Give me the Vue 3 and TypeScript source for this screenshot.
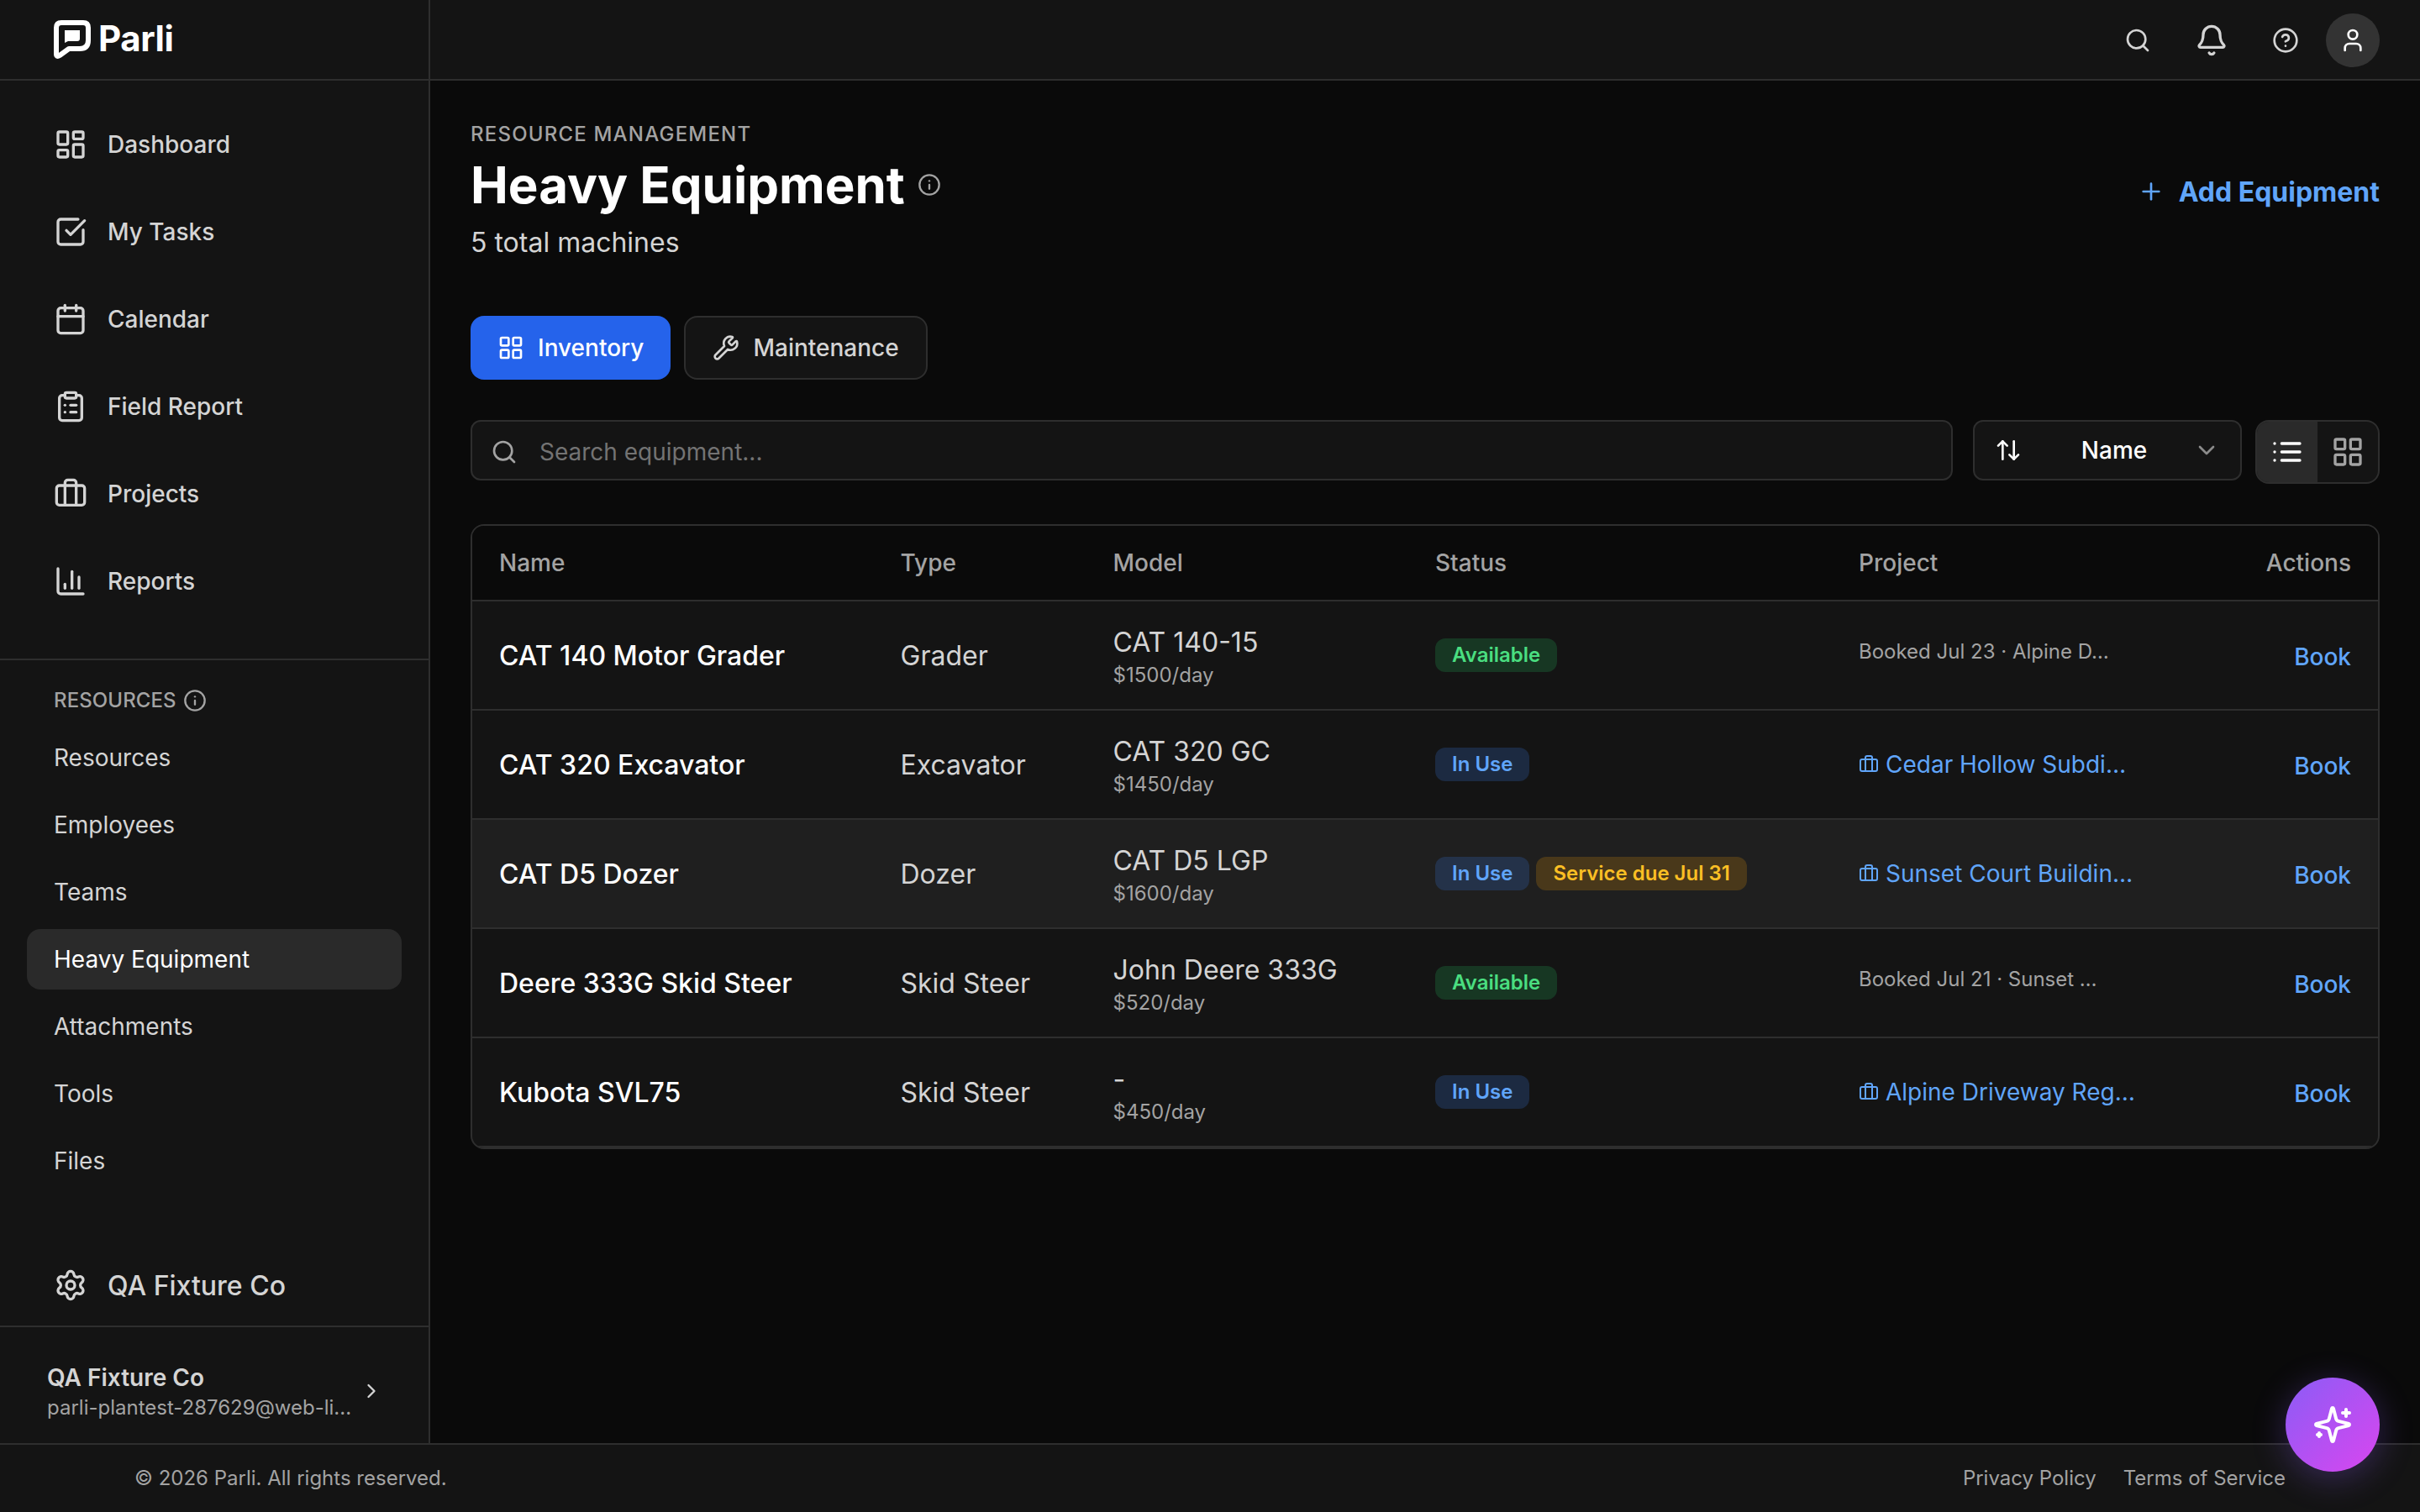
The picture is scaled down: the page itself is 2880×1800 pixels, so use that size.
<script setup lang="ts">
interface Badge {
  label: string
  tone: 'green' | 'blue' | 'amber'
}

interface Machine {
  name: string
  type: string
  model: string
  rate: string
  badges: Badge[]
  booked?: string
  project?: string
  hovered?: boolean
}

const icons: Record<string, string> = {
  dashboard:
    '<rect width="7" height="9" x="3" y="3" rx="1"/><rect width="7" height="5" x="14" y="3" rx="1"/><rect width="7" height="9" x="14" y="12" rx="1"/><rect width="7" height="5" x="3" y="16" rx="1"/>',
  tasks:
    '<path d="M21 10.656V19a2 2 0 0 1-2 2H5a2 2 0 0 1-2-2V5a2 2 0 0 1 2-2h12.344"/><path d="m9 11 3 3L22 4"/>',
  calendar:
    '<path d="M8 2v4"/><path d="M16 2v4"/><rect width="18" height="18" x="3" y="4" rx="2"/><path d="M3 10h18"/>',
  clipboard:
    '<rect width="8" height="4" x="8" y="2" rx="1" ry="1"/><path d="M16 4h2a2 2 0 0 1 2 2v14a2 2 0 0 1-2 2H6a2 2 0 0 1-2-2V6a2 2 0 0 1 2-2h2"/><path d="M12 11h4"/><path d="M12 16h4"/><path d="M8 11h.01"/><path d="M8 16h.01"/>',
  briefcase:
    '<path d="M16 20V4a2 2 0 0 0-2-2h-4a2 2 0 0 0-2 2v16"/><rect width="20" height="14" x="2" y="6" rx="2"/>',
  chart:
    '<path d="M3 3v16a2 2 0 0 0 2 2h16"/><path d="M18 17V9"/><path d="M13 17V5"/><path d="M8 17v-3"/>',
  info: '<circle cx="12" cy="12" r="10"/><path d="M12 16v-4"/><path d="M12 8h.01"/>',
  settings:
    '<path d="M9.671 4.136a2.34 2.34 0 0 1 4.659 0 2.34 2.34 0 0 0 3.319 1.915 2.34 2.34 0 0 1 2.33 4.033 2.34 2.34 0 0 0 0 3.831 2.34 2.34 0 0 1-2.33 4.033 2.34 2.34 0 0 0-3.319 1.915 2.34 2.34 0 0 1-4.659 0 2.34 2.34 0 0 0-3.32-1.915 2.34 2.34 0 0 1-2.33-4.033 2.34 2.34 0 0 0 0-3.831A2.34 2.34 0 0 1 6.35 6.051a2.34 2.34 0 0 0 3.319-1.915"/><circle cx="12" cy="12" r="3"/>',
  chevronRight: '<path d="m9 18 6-6-6-6"/>',
  chevronDown: '<path d="m6 9 6 6 6-6"/>',
  search: '<path d="m21 21-4.34-4.34"/><circle cx="11" cy="11" r="8"/>',
  bell: '<path d="M10.268 21a2 2 0 0 0 3.464 0"/><path d="M3.262 15.326A1 1 0 0 0 4 17h16a1 1 0 0 0 .74-1.673C19.41 13.956 18 12.499 18 8A6 6 0 0 0 6 8c0 4.499-1.411 5.956-2.738 7.326"/>',
  help: '<circle cx="12" cy="12" r="10"/><path d="M9.09 9a3 3 0 0 1 5.83 1c0 2-3 3-3 3"/><path d="M12 17h.01"/>',
  user: '<path d="M19 21v-2a4 4 0 0 0-4-4H9a4 4 0 0 0-4 4v2"/><circle cx="12" cy="7" r="4"/>',
  plus: '<path d="M5 12h14"/><path d="M12 5v14"/>',
  grid: '<rect width="7" height="7" x="3" y="3" rx="1"/><rect width="7" height="7" x="14" y="3" rx="1"/><rect width="7" height="7" x="14" y="14" rx="1"/><rect width="7" height="7" x="3" y="14" rx="1"/>',
  wrench:
    '<path d="M14.7 6.3a1 1 0 0 0 0 1.4l1.6 1.6a1 1 0 0 0 1.4 0l3.106-3.105c.32-.322.863-.22.983.218a6 6 0 0 1-8.259 7.057l-7.91 7.91a1 1 0 0 1-2.999-3l7.91-7.91a6 6 0 0 1 7.057-8.259c.438.12.54.662.219.984z"/>',
  sort: '<path d="m21 16-4 4-4-4"/><path d="M17 20V4"/><path d="m3 8 4-4 4 4"/><path d="M7 4v16"/>',
  list: '<path d="M3 12h.01"/><path d="M3 18h.01"/><path d="M3 6h.01"/><path d="M8 12h13"/><path d="M8 18h13"/><path d="M8 6h13"/>',
  sparkles:
    '<path d="M9.937 15.5A2 2 0 0 0 8.5 14.063l-6.135-1.582a.5.5 0 0 1 0-.962L8.5 9.936A2 2 0 0 0 9.937 8.5l1.582-6.135a.5.5 0 0 1 .963 0L14.063 8.5A2 2 0 0 0 15.5 9.937l6.135 1.581a.5.5 0 0 1 0 .964L15.5 14.063a2 2 0 0 0-1.437 1.437l-1.582 6.135a.5.5 0 0 1-.963 0z"/><path d="M20 3v4"/><path d="M22 5h-4"/><path d="M4 17v2"/><path d="M5 18H3"/>',
}

const primaryNav = [
  { label: 'Dashboard', icon: 'dashboard' },
  { label: 'My Tasks', icon: 'tasks' },
  { label: 'Calendar', icon: 'calendar' },
  { label: 'Field Report', icon: 'clipboard' },
  { label: 'Projects', icon: 'briefcase' },
  { label: 'Reports', icon: 'chart' },
]

const resourceNav = ['Resources', 'Employees', 'Teams', 'Heavy Equipment', 'Attachments', 'Tools', 'Files']
const activeResource = 'Heavy Equipment'

const columns = ['Name', 'Type', 'Model', 'Status', 'Project', 'Actions']

const available: Badge = { label: 'Available', tone: 'green' }
const inUse: Badge = { label: 'In Use', tone: 'blue' }

const machines: Machine[] = [
  { name: 'CAT 140 Motor Grader', type: 'Grader', model: 'CAT 140-15', rate: '$1500/day', badges: [available], booked: 'Booked Jul 23 · Alpine D…' },
  { name: 'CAT 320 Excavator', type: 'Excavator', model: 'CAT 320 GC', rate: '$1450/day', badges: [inUse], project: 'Cedar Hollow Subdi…' },
  {
    name: 'CAT D5 Dozer',
    type: 'Dozer',
    model: 'CAT D5 LGP',
    rate: '$1600/day',
    badges: [inUse, { label: 'Service due Jul 31', tone: 'amber' }],
    project: 'Sunset Court Buildin…',
    hovered: true,
  },
  { name: 'Deere 333G Skid Steer', type: 'Skid Steer', model: 'John Deere 333G', rate: '$520/day', badges: [available], booked: 'Booked Jul 21 · Sunset …' },
  { name: 'Kubota SVL75', type: 'Skid Steer', model: '-', rate: '$450/day', badges: [inUse], project: 'Alpine Driveway Reg…' },
]
</script>

<template>
  <div class="app">
    <div class="shell">
      <aside class="sidebar">
        <div class="brand">
          <svg class="brand-mark" viewBox="0 0 44 48" fill="none">
            <path d="M9 3H35Q41 3 41 9V24Q41 34 31 34H18L7 42Q3 44.500 3 40V9Q3 3 9 3Z" stroke="#fff" stroke-width="6" stroke-linejoin="round" />
            <path d="M13 12H31V22Q31 25 28 25H17L13 27Z" fill="#fff" />
          </svg>
          <span class="brand-name">Parli</span>
        </div>

        <nav class="primary">
          <a v-for="item in primaryNav" :key="item.label" class="primary-item">
            <svg class="icon i40" viewBox="0 0 24 24" v-html="icons[item.icon]" />
            <span>{{ item.label }}</span>
          </a>
        </nav>

        <div class="resources">
          <div class="resources-title">
            <span>RESOURCES</span>
            <svg class="icon i28" viewBox="0 0 24 24" v-html="icons.info" />
          </div>
          <a v-for="item in resourceNav" :key="item" class="resource-item" :class="{ active: item === activeResource }">{{ item }}</a>
        </div>

        <a class="company">
          <svg class="icon i40" viewBox="0 0 24 24" v-html="icons.settings" />
          <span>QA Fixture Co</span>
        </a>

        <div class="account">
          <div class="account-text">
            <div class="account-name">QA Fixture Co</div>
            <div class="account-mail">parli-plantest-287629@web-li...</div>
          </div>
          <svg class="icon i28" viewBox="0 0 24 24" v-html="icons.chevronRight" />
        </div>
      </aside>

      <div class="content">
        <header class="topbar">
          <button class="top-btn"><svg class="icon i32" viewBox="0 0 24 24" v-html="icons.search" /></button>
          <button class="top-btn"><svg class="icon i40" viewBox="0 0 24 24" v-html="icons.bell" /></button>
          <button class="top-btn"><svg class="icon i32" viewBox="0 0 24 24" v-html="icons.help" /></button>
          <button class="avatar"><svg class="icon i32" viewBox="0 0 24 24" v-html="icons.user" /></button>
        </header>

        <main class="page">
          <div class="page-head">
            <div>
              <div class="eyebrow">RESOURCE MANAGEMENT</div>
              <div class="title-row">
                <h1>Heavy Equipment</h1>
                <svg class="icon i28" viewBox="0 0 24 24" v-html="icons.info" />
              </div>
              <div class="subtitle">5 total machines</div>
            </div>
            <button class="add">
              <svg class="icon i32" viewBox="0 0 24 24" v-html="icons.plus" />
              <span>Add Equipment</span>
            </button>
          </div>

          <div class="tabs">
            <button class="tab selected"><svg class="icon i32" viewBox="0 0 24 24" v-html="icons.grid" /><span>Inventory</span></button>
            <button class="tab"><svg class="icon i32" viewBox="0 0 24 24" v-html="icons.wrench" /><span>Maintenance</span></button>
          </div>

          <div class="filters">
            <div class="search">
              <svg class="icon i32" viewBox="0 0 24 24" v-html="icons.search" />
              <span>Search equipment...</span>
            </div>
            <button class="sort">
              <svg class="icon i32" viewBox="0 0 24 24" v-html="icons.sort" />
              <span>Name</span>
              <svg class="icon i32 muted" viewBox="0 0 24 24" v-html="icons.chevronDown" />
            </button>
            <div class="views">
              <button class="view on"><svg class="icon i40" viewBox="0 0 24 24" v-html="icons.list" /></button>
              <button class="view"><svg class="icon i40" viewBox="0 0 24 24" v-html="icons.grid" /></button>
            </div>
          </div>

          <div class="table">
            <div class="row head">
              <div v-for="column in columns" :key="column" class="cell">{{ column }}</div>
            </div>
            <div v-for="machine in machines" :key="machine.name" class="row" :class="{ hovered: machine.hovered }">
              <div class="cell name">{{ machine.name }}</div>
              <div class="cell type">{{ machine.type }}</div>
              <div class="cell specs">
                <div class="model">{{ machine.model }}</div>
                <div class="rate">{{ machine.rate }}</div>
              </div>
              <div class="cell badges">
                <span v-for="badge in machine.badges" :key="badge.label" class="badge" :class="badge.tone">{{ badge.label }}</span>
              </div>
              <div class="cell">
                <div v-if="machine.booked" class="booked">{{ machine.booked }}</div>
                <a v-else class="project">
                  <svg class="icon i24" viewBox="0 0 24 24" v-html="icons.briefcase" />
                  <span>{{ machine.project }}</span>
                </a>
              </div>
              <div class="cell book">Book</div>
            </div>
          </div>
        </main>
      </div>
    </div>

    <footer class="footer">
      <span>© 2026 Parli. All rights reserved.</span>
      <div class="legal">
        <a>Privacy Policy</a>
        <a>Terms of Service</a>
      </div>
    </footer>

    <button class="assistant"><svg class="icon i48" viewBox="0 0 24 24" v-html="icons.sparkles" /></button>
  </div>
</template>

<style>
html,
body {
  background: #0a0a0a;
}
</style>

<style scoped>
.app {
  position: relative;
  display: flex;
  flex-direction: column;
  width: 2880px;
  height: 1800px;
  overflow: hidden;
  background: #0a0a0a;
  color: #d4d4d4;
  font-family: Inter, "Liberation Sans", sans-serif;
  font-size: 28px;
  line-height: 40px;
  white-space: nowrap;
}

.app * {
  box-sizing: border-box;
}

button {
  display: flex;
  align-items: center;
  margin: 0;
  padding: 0;
  border: 0;
  background: none;
  color: inherit;
  font: inherit;
}

.icon {
  flex: none;
  display: block;
  fill: none;
  stroke: currentColor;
  stroke-width: 2;
  stroke-linecap: round;
  stroke-linejoin: round;
}

.i24 { width: 24px; height: 24px; }
.i28 { width: 28px; height: 28px; }
.i32 { width: 32px; height: 32px; }
.i40 { width: 40px; height: 40px; }
.i48 { width: 48px; height: 48px; }
.muted { color: #8b8b8b; }

.shell {
  display: flex;
  height: 1718px;
}

/* Sidebar */
.sidebar {
  display: flex;
  flex-direction: column;
  width: 512px;
  background: #141414;
  border-right: 2px solid #2e2e2e;
}

.brand {
  display: flex;
  align-items: flex-start;
  height: 96px;
  padding: 24px 0 0 64px;
  border-bottom: 2px solid #2e2e2e;
}

.brand-mark {
  width: 44px;
  height: 48px;
}

.brand-name {
  margin-left: 9px;
  color: #fff;
  font-size: 42px;
  font-weight: 700;
  line-height: 44px;
  letter-spacing: -0.4px;
}

.primary {
  display: flex;
  flex-direction: column;
  gap: 16px;
  height: 690px;
  padding: 32px 32px 0;
  border-bottom: 2px solid #2e2e2e;
}

.primary-item,
.company {
  display: flex;
  align-items: center;
  gap: 24px;
  height: 88px;
  padding: 0 32px;
  font-weight: 500;
}

.resources {
  display: flex;
  flex-direction: column;
  gap: 8px;
  padding: 30px 32px 0;
}

.resources-title {
  display: flex;
  align-items: center;
  gap: 8px;
  height: 36px;
  margin-bottom: 6px;
  padding-left: 32px;
  color: #a3a3a3;
  font-size: 24px;
  font-weight: 500;
  letter-spacing: 0.1px;
}

.resource-item {
  height: 72px;
  padding-left: 32px;
  border-radius: 16px;
  line-height: 72px;
}

.resource-item.active {
  background: #2a2a2a;
  color: #fff;
}

.company {
  margin-top: auto;
  padding-left: 64px;
  height: 96px;
  font-size: 32px;
}

.company span {
  padding-top: 2px;
}

.account {
  display: flex;
  align-items: center;
  justify-content: space-between;
  height: 140px;
  padding: 14px 54px 0 56px;
  border-top: 2px solid #2e2e2e;
}

.account-text {
  padding-top: 2px;
}

.account-name {
  height: 36px;
  font-weight: 600;
  line-height: 36px;
}

.account-mail {
  color: #a3a3a3;
  font-size: 24px;
  line-height: 35px;
}

/* Top bar */
.content {
  flex: 1;
}

.topbar {
  display: flex;
  align-items: center;
  justify-content: flex-end;
  gap: 16px;
  height: 96px;
  padding-right: 48px;
  background: #141414;
  border-bottom: 2px solid #2e2e2e;
  padding-top: 2px;
}

.top-btn {
  justify-content: center;
  width: 72px;
  height: 72px;
}

.avatar {
  justify-content: center;
  width: 64px;
  height: 64px;
  margin-left: -4px;
  border-radius: 50%;
  background: #333;
  color: #fff;
}

/* Page */
.page {
  padding: 48px;
}

.page-head {
  display: flex;
  justify-content: space-between;
  height: 232px;
}

.eyebrow {
  color: #a3a3a3;
  font-size: 24px;
  font-weight: 500;
  line-height: 32px;
  letter-spacing: 1.2px;
}

.title-row {
  display: flex;
  align-items: center;
  gap: 15px;
  height: 88px;
  color: #a3a3a3;
}

h1 {
  margin: 0;
  color: #fff;
  font-size: 60px;
  font-weight: 700;
  line-height: 88px;
}

.subtitle {
  margin-top: 1px;
  font-size: 32px;
  line-height: 48px;
}

.add {
  gap: 17px;
  height: 48px;
  margin-top: 60px;
  color: #60a5fa;
  font-size: 32px;
  font-weight: 700;
}

.add span {
  padding-top: 2px;
}

.tabs {
  display: flex;
  gap: 16px;
}

.tab {
  gap: 16px;
  height: 76px;
  padding: 0 32px;
  border: 2px solid #2e2e2e;
  border-radius: 16px;
  background: #141414;
  font-weight: 500;
}

.tab.selected {
  border: 0;
  background: #2563eb;
  color: #fff;
}

.filters {
  display: flex;
  align-items: flex-start;
  margin-top: 48px;
}

.search {
  flex: 1;
  display: flex;
  align-items: center;
  gap: 26px;
  height: 72px;
  padding: 4px 22px 0;
  border: 2px solid #2e2e2e;
  border-radius: 12px;
  background: #141414;
  color: #a3a3a3;
}

.search span {
  color: #737373;
}

.sort {
  width: 320px;
  height: 72px;
  margin-left: 24px;
  padding: 0 24px;
  border: 2px solid #2e2e2e;
  border-radius: 12px;
  background: #141414;
  color: #fff;
  font-weight: 500;
}

.sort span {
  flex: 1;
  margin-left: 16px;
  text-align: center;
}

.views {
  display: flex;
  width: 148px;
  height: 76px;
  margin-left: 16px;
  border: 2px solid #2e2e2e;
  border-radius: 16px;
  background: #141414;
  overflow: hidden;
}

.view {
  justify-content: center;
  width: 72px;
  color: #a3a3a3;
}

.view.on {
  background: #2a2a2a;
  color: #fff;
}

/* Table */
.table {
  margin-top: 48px;
  border: 2px solid #2e2e2e;
  border-radius: 16px;
  background: #141414;
  overflow: hidden;
}

.row {
  display: grid;
  grid-template-columns: 477.5px 253px 383.500px 504px 1fr auto;
  align-items: center;
  height: 130px;
  border-bottom: 2px solid #2e2e2e;
}

.row.head {
  height: 90px;
  background: #0a0a0a;
  color: #a3a3a3;
  font-weight: 500;
}

.row.hovered {
  background: #1f1f1f;
}

.cell {
  padding: 0 32px;
}

.name {
  padding-top: 2px;
  color: #fff;
  font-size: 32px;
  font-weight: 500;
}

.type {
  padding-top: 2px;
  font-size: 32px;
}

.specs {
  padding-top: 2px;
}

.model {
  font-size: 32px;
  line-height: 46px;
}

.rate {
  color: #a3a3a3;
  font-size: 24px;
  line-height: 32px;
}

.badges {
  display: flex;
  gap: 8px;
}

.badge {
  height: 40px;
  padding: 0 20px;
  border-radius: 12px;
  font-size: 24px;
  font-weight: 600;
  line-height: 39px;
}

.badge.green {
  background: rgba(34, 197, 94, 0.2);
  color: #4ade80;
}

.badge.blue {
  background: rgba(59, 130, 246, 0.2);
  color: #60a5fa;
}

.badge.amber {
  background: rgba(245, 158, 11, 0.2);
  color: #fbbf24;
}

.booked {
  margin-bottom: 9px;
  color: #a3a3a3;
  font-size: 24px;
  line-height: 32px;
}

.project {
  display: flex;
  align-items: center;
  gap: 8px;
  color: #60a5fa;
}

.book {
  padding-top: 4px;
  color: #60a5fa;
  font-weight: 500;
}

/* Footer */
.footer {
  display: flex;
  align-items: center;
  justify-content: space-between;
  height: 82px;
  padding: 0 160px;
  border-top: 2px solid #2e2e2e;
  background: #141414;
  color: #a3a3a3;
  font-size: 24px;
}

.legal {
  display: flex;
  gap: 32px;
}

.assistant {
  position: absolute;
  right: 48px;
  bottom: 48px;
  justify-content: center;
  width: 112px;
  height: 112px;
  border-radius: 50%;
  background: linear-gradient(135deg, #8b5cf6, #d946ef);
  box-shadow: 0 8px 40px rgba(139, 92, 246, 0.3);
  color: #fff;
}
</style>
